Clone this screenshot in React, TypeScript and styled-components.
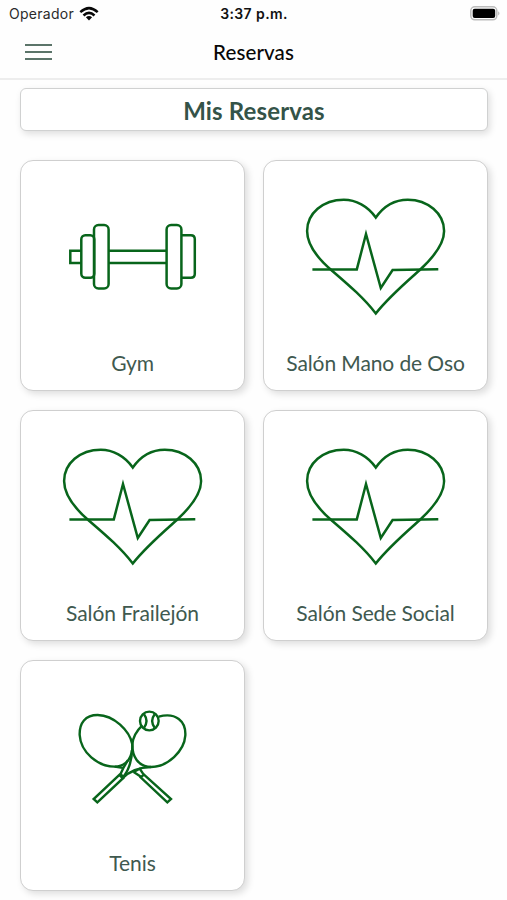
import React from "react";
import styled, { createGlobalStyle } from "styled-components";

const GlobalStyle = createGlobalStyle`
  * { box-sizing: border-box; }
  body { margin: 0; background: #fefefe; overflow: hidden; }
`;

const Screen = styled.div`
  width: 507px;
  height: 900px;
  overflow: hidden;
  background: #fefefe;
  font-family: Lato, sans-serif;
`;

const StatusBar = styled.header`
  display: grid;
  grid-template-columns: 1fr auto 1fr;
  align-items: center;
  height: 27px;
  padding: 0 6px 0 9px;
  font-family: Inter, sans-serif;
  font-size: 14px;
  line-height: 27px;
  color: #2b2b2b;
`;

const Carrier = styled.div`
  display: flex;
  align-items: center;
  gap: 5px;
  letter-spacing: 0.28px;
`;

const Clock = styled.div`
  font-weight: 600;
  font-size: 14px;
  letter-spacing: 0.4px;
  color: #111;
  padding-right: 2px;
`;

const Battery = styled.div`
  display: flex;
  justify-content: flex-end;
`;

const NavBar = styled.nav`
  display: grid;
  grid-template-columns: 54px 1fr 54px;
  align-items: center;
  height: 53px;
  border-bottom: 2px solid #ededed;
`;

const MenuButton = styled.button`
  display: flex;
  flex-direction: column;
  gap: 4.8px;
  width: 27px;
  margin: 0 0 1px 25px;
  padding: 0;
  border: 0;
  background: none;
`;

const MenuLine = styled.span`
  height: 2px;
  background: #5b7469;
`;

const Title = styled.h1`
  margin: 0 0 1px;
  text-align: center;
  font-size: 20.5px;
  font-weight: 500;
  line-height: 24px;
  letter-spacing: 0.12px;
  color: #080808;
`;

const Content = styled.main`
  padding: 8px 19px 0 20px;
`;

const MyBookings = styled.button`
  display: block;
  width: 100%;
  height: 43px;
  padding: 2px 0 0;
  border: 1px solid #d0d1d1;
  border-radius: 6px;
  background: #fff;
  box-shadow: 2px 3px 7px rgba(0, 0, 0, 0.13);
  font: 700 24px/39px Lato, sans-serif;
  letter-spacing: 0.15px;
  color: #345348;
`;

const Grid = styled.div`
  display: grid;
  grid-template-columns: 225px 225px;
  column-gap: 18px;
  row-gap: 19.4px;
  margin-top: 29px;
`;

const Card = styled.section`
  display: flex;
  flex-direction: column;
  align-items: center;
  height: 230.8px;
  padding-top: 29px;
  border: 1px solid #cfcfcf;
  border-radius: 13px;
  background: #fff;
  box-shadow: 3px 3px 7px rgba(0, 0, 0, 0.13);
`;

const Label = styled.div`
  margin-top: 29.6px;
  font-size: 21px;
  line-height: 26px;
  letter-spacing: -0.1px;
  white-space: nowrap;
  color: #40594f;
`;

const Drawing = styled.svg`
  display: block;
  flex: none;
  width: 160px;
  height: 130px;
  fill: none;
  stroke: #08651b;
  stroke-width: 2.5;
`;

const Dumbbell = () => (
  <Drawing viewBox="0.4 0 160 130">
    <path d="M28.5 60.7H17.7V73H28.5M56 60.7h58M56 73h58" />
    <rect x="28.7" y="45.2" width="13" height="42.6" rx="4" />
    <rect x="41.4" y="35" width="14.6" height="63.4" rx="4.5" />
    <rect x="114" y="35" width="14.8" height="63.4" rx="4.5" />
    <path d="M128.8 45.2h9.4q4 0 4 4v34.6q0 4-4 4h-9.4" />
  </Drawing>
);

const HeartPulse = () => (
  <Drawing viewBox="0.2 0 160 130">
    <path d="M80 27.5C72 16 60 9.7 48 9.7C27 9.7 11.3 23.5 11.3 41C11.3 55 22 68.5 36 80.5C54 96 68 108 80 123.5C92 108 106 96 124 80C137 68 148.3 55 148.3 41C148.3 23.5 132 9.7 112 9.7C99 9.7 88 16 80 27.5Z" />
    <path d="M16.6 79.4H61L70.2 44L85 98L96.8 80L142.5 79.3" />
  </Drawing>
);

const TennisRackets = () => (
  <Drawing viewBox="-21 -30 480 390">
    <g strokeWidth="7.2">
      <path d="M217 133C209 92 162 46 113 45C76 45 58 69 59 105C62 157 114 200 164 200C202 199 219 169 217 133Z" />
      <path d="M217 133C219 111 232 90 247 76M296 50C348 36 378 64 376 106C373 153 323 201 273 201C234 200 216 169 217 133" />
      <circle cx="268" cy="63" r="28" />
      <path d="M252 43Q267 63 252 83M284 43Q269 63 284 83" />
      <path d="M216 150C216 178 206 216 185 235M164 200L190 204L204 180M190 204L182 221M182 221L101 297L112 307L190 234ZM178 224L189 236" />
      <path d="M273 201C238 202 211 211 187 235M221 216L239 206L251 224M221 216L244 231M252 224L333 297L322 307L242 232Z" />
    </g>
  </Drawing>
);

const places = [
  { name: "Gym", Icon: Dumbbell },
  { name: "Salón Mano de Oso", Icon: HeartPulse },
  { name: "Salón Frailejón", Icon: HeartPulse },
  { name: "Salón Sede Social", Icon: HeartPulse },
  { name: "Tenis", Icon: TennisRackets },
];

const WifiIcon = () => (
  <svg width="20" height="16" viewBox="0 0 20 16" fill="none" stroke="#080808" strokeWidth="2.5">
    <path d="M1.3 6.2Q10-2 18.7 6.2M4.5 9.5Q10 4.3 15.5 9.5" />
    <path d="M6.9 11.3Q10 8.5 13.1 11.3L10 14.4Z" fill="#080808" stroke="none" />
  </svg>
);

const BatteryIcon = () => (
  <svg width="31" height="15" viewBox="0 0 31 15">
    <rect x="0.8" y="0.8" width="26" height="13" rx="4" fill="#fff" stroke="#bcbcbc" strokeWidth="1.5" />
    <rect x="2.7" y="2.7" width="22.5" height="9.3" rx="2" fill="#000" />
    <path d="M28.3 5.2Q30.5 7.3 28.3 9.4Z" fill="#aaa" />
  </svg>
);

export default function App() {
  return (
    <Screen>
      <GlobalStyle />
      <StatusBar>
        <Carrier>Operador<WifiIcon /></Carrier>
        <Clock>3:37 p.m.</Clock>
        <Battery><BatteryIcon /></Battery>
      </StatusBar>
      <NavBar>
        <MenuButton aria-label="Menú"><MenuLine /><MenuLine /><MenuLine /></MenuButton>
        <Title>Reservas</Title>
      </NavBar>
      <Content>
        <MyBookings>Mis Reservas</MyBookings>
        <Grid>
          {places.map(({ name, Icon }) => (
            <Card key={name}>
              <Icon />
              <Label>{name}</Label>
            </Card>
          ))}
        </Grid>
      </Content>
    </Screen>
  );
}
